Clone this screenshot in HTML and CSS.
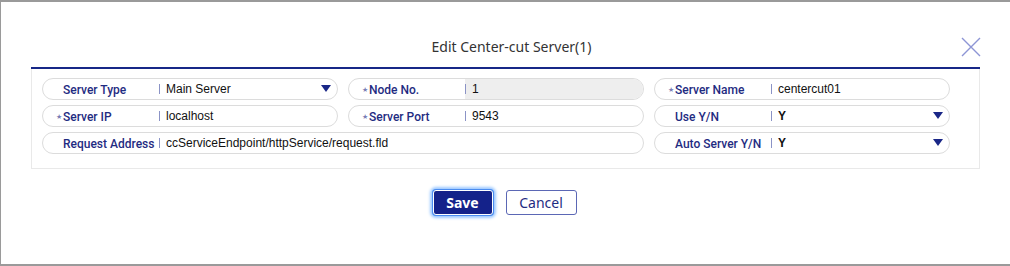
FILE: index.html
```html
<!DOCTYPE html>
<html lang="en">
<head>
  <meta charset="UTF-8" />
  <title>Edit Center-cut Server</title>
  <link rel="stylesheet" href="styles.css">
</head>
<body>
  <div class="dialog">
    <div class="dialog-head">
      <h2 class="dialog-title">Edit Center-cut Server(1)</h2>
      <button class="close-btn" aria-label="Close">
        <svg width="20" height="20" viewBox="0 0 20 20">
          <path d="M1 1 L19 19 M19 1 L1 19" stroke="#8d95d5" stroke-width="1.4" fill="none"/>
        </svg>
      </button>
    </div>

    <!-- form grid: 3 columns of pill shaped fields -->
    <div class="form-box">
      <div class="field">
        <div class="field-label">Server Type</div>
        <div class="field-value select">Main Server<span class="caret"></span></div>
      </div>
      <div class="field">
        <div class="field-label"><span class="req">★</span>Node No.</div>
        <div class="field-value readonly">1</div>
      </div>
      <div class="field">
        <div class="field-label"><span class="req">★</span>Server Name</div>
        <div class="field-value">centercut01</div>
      </div>

      <div class="field">
        <div class="field-label"><span class="req">★</span>Server IP</div>
        <div class="field-value">localhost</div>
      </div>
      <div class="field">
        <div class="field-label"><span class="req">★</span>Server Port</div>
        <div class="field-value">9543</div>
      </div>
      <div class="field">
        <div class="field-label">Use Y/N</div>
        <div class="field-value select strong">Y<span class="caret"></span></div>
      </div>

      <div class="field wide">
        <div class="field-label">Request Address</div>
        <div class="field-value">ccServiceEndpoint/httpService/request.fld</div>
      </div>
      <div class="field">
        <div class="field-label">Auto Server Y/N</div>
        <div class="field-value select strong">Y<span class="caret"></span></div>
      </div>
    </div>

    <div class="actions">
      <button class="btn btn-primary">Save</button>
      <button class="btn btn-outline">Cancel</button>
    </div>
  </div>
</body>
</html>
```

FILE: styles.css
```css
body {
  margin: 0;
  background-color: #9a9a9a;
  font-family: "Liberation Sans", Arial, sans-serif;
}
.dialog {
  background: #fff;
  margin: 2px 0 0 1px;
  height: 262px;
  box-sizing: border-box;
  padding: 0 30px 0 30px;
}
.dialog-head {
  display: flex;
  align-items: center;
  justify-content: center;
  height: 65px;
  border-bottom: 2px solid #172787;
  position: relative;
}
.dialog-title {
  margin: 0;
  padding-top: 24px;
  padding-left: 12px;
  font-family: "Noto Sans", sans-serif;
  font-size: 14px;
  font-weight: 400;
  color: #333;
}
.close-btn {
  position: absolute;
  right: -1px;
  top: 35px;
  border: 0;
  background: none;
  padding: 0;
  width: 20px;
  height: 20px;
}
/* the light grey box holding the fields */
.form-box {
  display: grid;
  grid-template-columns: repeat(3, 296px);
  column-gap: 10px;
  row-gap: 5px;
  padding: 9px 11px 14px 10px;
  border: 1px solid #e9e9e9;
  border-top: 0;
}
.field {
  display: flex;
  height: 22px;
  box-sizing: border-box;
  border: 1px solid #dcdcdc;
  border-radius: 11px;
  overflow: hidden;
}
.field.wide {
  grid-column: span 2;
}
.field-label {
  width: 96px;
  flex-shrink: 0;
  padding-left: 20px;
  font-family: Roboto, sans-serif;
  font-size: 12px;
  font-weight: 500;
  color: #1f2c82;
  line-height: 22px;
  white-space: nowrap;
}
.req {
  display: inline-block;
  width: 7px;
  margin-left: -7px;
  font-family: "DejaVu Sans", sans-serif;
  font-size: 7px;
  color: #7a7db5;
  vertical-align: top;
  line-height: 23px;
}
.field-value {
  flex: 1;
  position: relative;
  padding-left: 7px;
  font-size: 12px;
  color: #111;
  line-height: 21px;
}
.field-value::before {
  content: "";
  position: absolute;
  left: 0;
  top: 5px;
  width: 1px;
  height: 10px;
  background: #8b93c6;
}
.field-value.readonly {
  background: #eeeeee;
}
.field-value.strong {
  font-weight: 700;
}
.caret {
  position: absolute;
  right: 6px;
  top: 6px;
  width: 0;
  height: 0;
  border-left: 5px solid transparent;
  border-right: 5px solid transparent;
  border-top: 7px solid #1a2787;
}
.actions {
  display: flex;
  justify-content: center;
  gap: 13px;
  padding-top: 20px;
  margin-right: 2px;
}
.btn {
  height: 25px;
  box-sizing: border-box;
  border-radius: 3px;
  font-family: "Noto Sans", sans-serif;
  font-size: 14px;
  padding: 0;
  cursor: pointer;
}
.btn-primary {
  width: 60px;
  margin-top: 1px;
  background: #14228a;
  color: #fff;
  font-weight: 700;
  border: 1px solid #fff;
  box-shadow: 0 0 0 1px #4a8cf0, 0 0 3px 3px #9cc8ff;
}
.btn-outline {
  width: 71px;
  height: 25px;
  margin-top: 1px;
  background: #fff;
  color: #1f2c82;
  border: 1px solid #5b67b5;
}
```
